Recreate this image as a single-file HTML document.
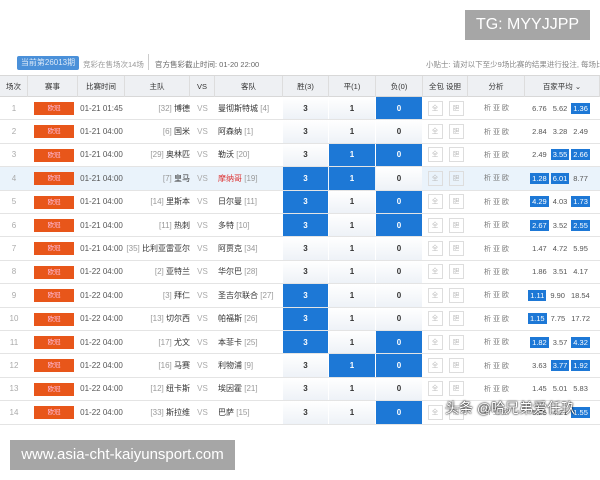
<!DOCTYPE html>
<html><head><meta charset="utf-8"><style>
*{margin:0;padding:0;box-sizing:border-box}
body{width:600px;height:480px;background:#fff;font-family:"Liberation Sans","Noto Sans CJK SC",sans-serif;position:relative;overflow:hidden;color:#444}
.tg{position:absolute;left:465px;top:10px;width:125px;height:30px;background:#a6a6a6;color:#fff;font-size:16px;line-height:30px;text-align:center}
.url{position:absolute;left:10px;top:440px;width:225px;height:30px;background:#a6a6a6;color:#fff;font-size:15px;line-height:30px;text-align:center}
.btn{position:absolute;left:17px;top:56px;width:62px;height:14px;background:#4a90d9;color:#dbe8f7;font-size:8px;line-height:14px;text-align:center;border-radius:2px}
.t{position:absolute;font-size:7.5px;color:#666;white-space:nowrap}
.hdr{position:absolute;left:0;top:75px;width:600px;height:22px;background:#eef0f3;border-top:1px solid #d8d8d8;border-bottom:1px solid #d8d8d8}
.row{position:absolute;left:0;width:600px;height:23.4px;border-bottom:1px solid #e4e4e4}
.c{position:absolute;top:0;height:100%;font-size:8px;display:flex;align-items:center;justify-content:center;white-space:nowrap}
.tag{position:absolute;left:34px;top:5px;width:40px;height:13px;background:#e8561a;color:#fbd;font-size:6.5px;line-height:13px;text-align:center}
.b{background:#1d78d6;color:#fff!important}
.o{padding:1px 2px;margin:0 1px}
.box{display:inline-block;width:15px;height:15px;border:1px solid #ddd;font-size:6.5px;color:#bbb;line-height:13px;text-align:center;margin:0 3px}
.wm{position:absolute;left:445px;top:398px;font-size:14px;color:#fff;text-shadow:0 0 2px #000,0 0 1px #000;white-space:nowrap}
</style></head><body>
<div class="tg">TG: MYYJJPP</div>
<div class="btn">当前第26013期</div>
<div class="t" style="left:83px;top:59px;color:#999">竞彩在售场次14场</div>
<div style="position:absolute;left:148px;top:54px;width:1px;height:16px;background:#ccc"></div>
<div class="t" style="left:155px;top:59px">官方售彩截止时间: 01-20 22:00</div>
<div class="t" style="left:426px;top:59px;color:#888">小贴士: 请对以下至少9场比赛的结果进行投注, 每场比赛</div>
<div class="hdr"></div>
<div id="tb"></div>
<div class="wm">头条 @哈兄弟爱任玖</div>
<div class="url">www.asia-cht-kaiyunsport.com</div>
<script>
const H=[["场次",0,28],["赛事",28,78],["比赛时间",78,125],["主队",125,190],["VS",190,215],["客队",215,283],["胜(3)",283,329],["平(1)",329,376],["负(0)",376,423],["全包 设胆",423,468],["分析",468,525],["百家平均 ⌄",525,600]];
let h='';H.forEach(x=>h+=`<div class="c" style="top:76px;height:21px;left:${x[1]}px;width:${x[2]-x[1]}px;font-size:7.5px;color:#333;border-right:1px solid #ddd">${x[0]}</div>`);
const D=[["01-21 01:45","[32] 博德","曼彻斯特城 [4]",[0,0,1],["6.76","5.62","1.36"],[0,0,1]],
["01-21 04:00","[6] 国米","阿森纳 [1]",[0,0,0],["2.84","3.28","2.49"],[0,0,0]],
["01-21 04:00","[29] 奥林匹","勒沃 [20]",[0,1,1],["2.49","3.55","2.66"],[0,1,1]],
["01-21 04:00","[7] 皇马","摩纳哥 [19]",[1,1,0],["1.28","6.01","8.77"],[1,1,0]],
["01-21 04:00","[14] 里斯本","日尔曼 [11]",[1,0,1],["4.29","4.03","1.73"],[1,0,1]],
["01-21 04:00","[11] 热刺","多特 [10]",[1,0,1],["2.67","3.52","2.55"],[1,0,1]],
["01-21 04:00","[35] 比利亚雷亚尔","阿贾克 [34]",[0,0,0],["1.47","4.72","5.95"],[0,0,0]],
["01-22 04:00","[2] 亚特兰","华尔巴 [28]",[0,0,0],["1.86","3.51","4.17"],[0,0,0]],
["01-22 04:00","[3] 拜仁","圣吉尔联合 [27]",[1,0,0],["1.11","9.90","18.54"],[1,0,0]],
["01-22 04:00","[13] 切尔西","帕福斯 [26]",[1,0,0],["1.15","7.75","17.72"],[1,0,0]],
["01-22 04:00","[17] 尤文","本菲卡 [25]",[1,0,1],["1.82","3.57","4.32"],[1,0,1]],
["01-22 04:00","[16] 马赛","利物浦 [9]",[0,1,1],["3.63","3.77","1.92"],[0,1,1]],
["01-22 04:00","[12] 纽卡斯","埃因霍 [21]",[0,0,0],["1.45","5.01","5.83"],[0,0,0]],
["01-22 04:00","[33] 斯拉维","巴萨 [15]",[0,0,1],["5.25","4.21","1.55"],[0,0,1]]];
D.forEach((d,i)=>{const y=97+i*23.4;const bg=i==3?'#eaf3fb':'#fff';
h+=`<div class="row" style="top:${y}px;background:${bg}">
<div class="c" style="left:0;width:28px;color:#aaa">${i+1}</div>
<div class="tag">欧冠</div>
<div class="c" style="left:78px;width:47px;color:#555">${d[0]}</div>
<div class="c" style="left:125px;width:65px;justify-content:flex-end;color:#333">${d[1].replace(/(\[\d+\]) /,'<span style="color:#999">$1</span>&nbsp;')}</div>
<div class="c" style="left:190px;width:25px;color:#aaa">VS</div>
<div class="c" style="left:218px;width:65px;justify-content:flex-start;color:${i==3?'#d33':'#333'}">${d[2].replace(/ (\[\d+\])/,'&nbsp;<span style="color:#999">$1</span>')}</div>`;
[[283,329,'3'],[329,376,'1'],[376,423,'0']].forEach((c,k)=>{h+=`<div class="c ${d[3][k]?'b':''}" style="left:${c[0]}px;width:${c[1]-c[0]-1}px;font-weight:bold;color:#333;${d[3][k]?'':'background:linear-gradient(#fff,#eef2f7)'}">${c[2]}</div>`});
h+=`<div class="c" style="left:423px;width:45px"><span class="box">全</span><span class="box">胆</span></div>
<div class="c" style="left:468px;width:57px;color:#777;font-size:7px">析&nbsp;亚&nbsp;欧</div>
<div class="c" style="left:525px;width:70px;color:#555;font-size:7.5px">${d[4].map((v,k)=>`<span class="o ${d[5][k]?'b':''}">${v}</span>`).join('')}</div></div>`;});
document.getElementById('tb').innerHTML=h;
</script>
</body></html>
